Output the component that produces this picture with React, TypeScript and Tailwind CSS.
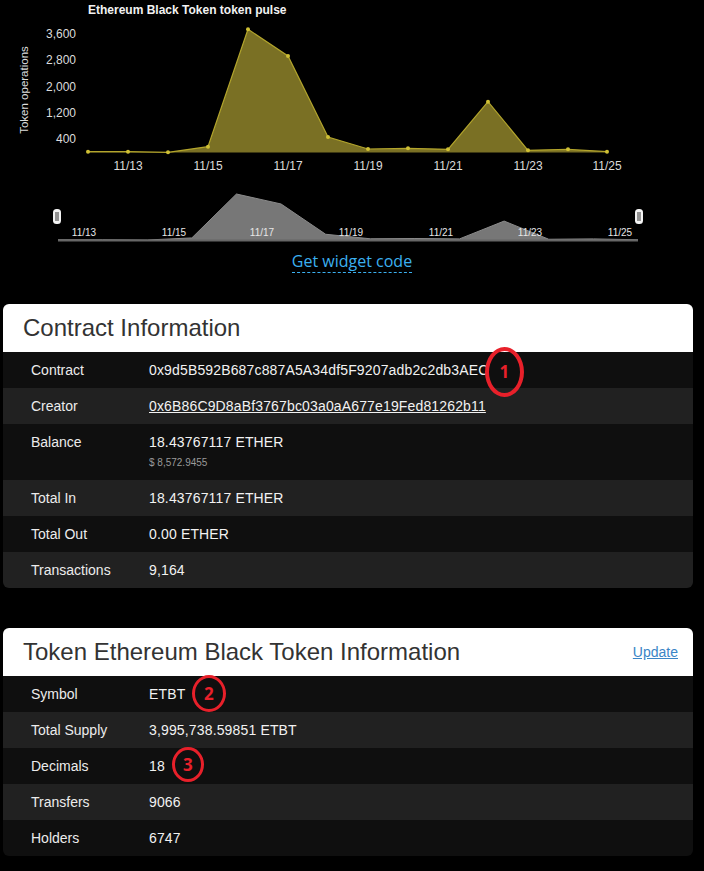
import type { ReactNode } from "react";

const xs = [88, 128, 168, 208, 248, 288, 328, 368, 408, 448, 488, 528, 568, 607];
const ys = [151.7, 151.7, 152.3, 146.7, 29.3, 56, 137, 149, 148.3, 149.3, 101.7, 150.3, 149.3, 151.7];
const base = 152.5;

const yTicks = [
  { label: "3,600", y: 34 },
  { label: "2,800", y: 60 },
  { label: "2,000", y: 87 },
  { label: "1,200", y: 113 },
  { label: "400", y: 139 },
];

const xLabels = ["11/13", "11/15", "11/17", "11/19", "11/21", "11/23", "11/25"];

// navigator strip below the main chart
const navX = xs.map((_, i) => 58 + (i * 580) / 13);
const navY = ys.map((y) => 240 - (152.3 - y) * (46 / 123));
const navLabelX = [84, 174, 262, 351, 441, 530, 620];

function PulseChart() {
  const line = xs.map((x, i) => `${x},${ys[i]}`).join(" L");
  const area = `M${xs[0]},${base} L${line} L${xs[xs.length - 1]},${base} Z`;
  const navLine = navX.map((x, i) => `${x},${navY[i]}`).join(" L");
  const navArea = `M${navX[0]},240 L${navLine} L${navX[navX.length - 1]},240 Z`;

  return (
    <svg width="704" height="246" className="block" style={{ fontFamily: '"Liberation Sans", Arial, sans-serif' }}>
      <text x="88" y="14" fill="#f2f2f2" fontSize="12" fontWeight="bold">
        Ethereum Black Token token pulse
      </text>
      <text x="28" y="90" fill="#dcdcdc" fontSize="11.5" textAnchor="middle" transform="rotate(-90 28 90)">
        Token operations
      </text>
      {yTicks.map((t) => (
        <text key={t.label} x="76" y={t.y + 4} fill="#dcdcdc" fontSize="12" textAnchor="end">
          {t.label}
        </text>
      ))}
      <path d={area} fill="#7a7024" />
      <path d={`M${line}`} fill="none" stroke="#b3a52c" strokeWidth="1.2" />
      {xs.map((x, i) => (
        <circle key={x} cx={x} cy={ys[i]} r="2" fill="#cfc034" />
      ))}
      {xLabels.map((l, i) => (
        <text key={l} x={128 + i * 80 - (i === 6 ? 1 : 0)} y="170" fill="#dcdcdc" fontSize="12" textAnchor="middle">
          {l}
        </text>
      ))}

      <path d={navArea} fill="#777777" />
      <path d={`M${navLine}`} fill="none" stroke="#8a8a8a" strokeWidth="1" />
      <line x1="58" y1="240.5" x2="638" y2="240.5" stroke="#666" strokeWidth="2" />
      {xLabels.map((l, i) => (
        <text key={l} x={navLabelX[i]} y="236" fill="#e6e6e6" fontSize="10" textAnchor="middle">
          {l}
        </text>
      ))}
      {[57, 639].map((cx) => (
        <g key={cx}>
          <rect x={cx - 4} y="209" width="8" height="15" rx="3.5" fill="#f4f4f4" />
          <line x1={cx - 1} y1="212" x2={cx - 1} y2="221" stroke="#333" strokeWidth="1" />
          <line x1={cx + 1} y1="212" x2={cx + 1} y2="221" stroke="#333" strokeWidth="1" />
        </g>
      ))}
    </svg>
  );
}

function Marker({ n, w, h, stroke }: { n: string; w: number; h: number; stroke: number }) {
  return (
    <span
      className="absolute flex items-center justify-center rounded-[50%] border-[#e8202a] text-[#e8202a] font-bold text-[17px] leading-none"
      style={{ width: w, height: h, borderWidth: stroke, fontFamily: '"Open Sans", sans-serif' }}
    >
      {n}
    </span>
  );
}

function Row({ label, dark, children }: { label: string; dark?: boolean; children: ReactNode }) {
  return (
    <div className={`flex min-h-9 items-center px-[28px] ${dark ? "bg-[#0f0f0f]" : "bg-[#212121]"}`}>
      <div className="w-[118px] shrink-0 text-[#ececec]">{label}</div>
      <div className="relative tracking-[0.15px] text-[#f2f2f2]">{children}</div>
    </div>
  );
}

function Card({ title, right, children }: { title: string; right?: ReactNode; children: ReactNode }) {
  return (
    <div className="ml-[3px] w-[690px] overflow-hidden rounded-[6px] text-[14px]">
      <div className="flex h-12 items-center justify-between bg-white pl-5 pr-[15px]">
        <h2 className="text-[24px] font-normal text-[#333]">{title}</h2>
        {right}
      </div>
      {children}
    </div>
  );
}

export default function App() {
  return (
    <div className="min-h-[871px] bg-black pb-4" style={{ fontFamily: '"Liberation Sans", Arial, sans-serif' }}>
      <PulseChart />
      <div className="mt-[5px] flex justify-center">
        <a
          href="#"
          className="border-b border-dashed border-[#3bb0f0] pb-[1px] text-[16px] leading-5 text-[#3bb0f0]"
          style={{ fontFamily: '"Open Sans", sans-serif' }}
        >
          Get widget code
        </a>
      </div>

      <div className="mt-[31px]">
        <Card title="Contract Information">
          <Row label="Contract" dark>
            0x9d5B592B687c887A5A34df5F9207adb2c2db3AEC
            <span className="absolute left-[336px] top-[-13px]">
              <Marker n="1" w={39} h={50} stroke={4} />
            </span>
          </Row>
          <Row label="Creator">
            <a href="#" className="underline">0x6B86C9D8aBf3767bc03a0aA677e19Fed81262b11</a>
          </Row>
          <div className="flex items-start bg-[#0f0f0f] px-[28px] pt-2 pb-[9px]">
            <div className="w-[118px] shrink-0 leading-5 text-[#ececec]">Balance</div>
            <div>
              <div className="leading-5 tracking-[0.15px] text-[#f2f2f2]">18.43767117 ETHER</div>
              <div className="mt-[3px] text-[10px] leading-4 text-[#9a9a9a]">$ 8,572.9455</div>
            </div>
          </div>
          <Row label="Total In">18.43767117 ETHER</Row>
          <Row label="Total Out" dark>0.00 ETHER</Row>
          <Row label="Transactions">9,164</Row>
        </Card>
      </div>

      <div className="mt-10">
        <Card
          title="Token Ethereum Black Token Information"
          right={
            <a href="#" className="text-[14px] text-[#3a85c6] underline">
              Update
            </a>
          }
        >
          <Row label="Symbol" dark>
            ETBT
            <span className="absolute left-[43px] top-[-9px]">
              <Marker n="2" w={34} h={37} stroke={3} />
            </span>
          </Row>
          <Row label="Total Supply">3,995,738.59851 ETBT</Row>
          <Row label="Decimals" dark>
            18
            <span className="absolute left-[23px] top-[-9px]">
              <Marker n="3" w={32} h={35} stroke={3} />
            </span>
          </Row>
          <Row label="Transfers">9066</Row>
          <Row label="Holders" dark>6747</Row>
        </Card>
      </div>
    </div>
  );
}
